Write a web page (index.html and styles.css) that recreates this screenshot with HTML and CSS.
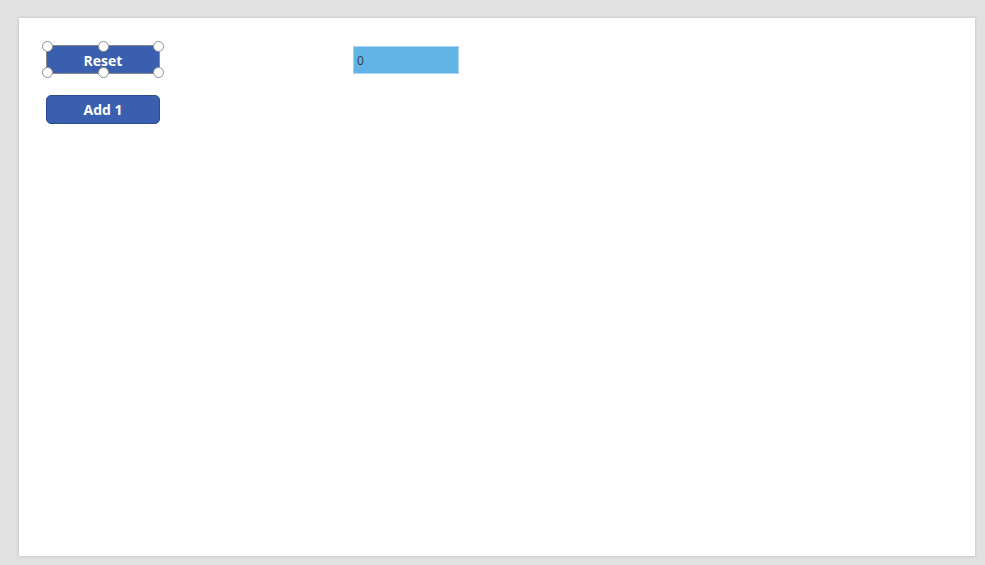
FILE: index.html
```html
<!DOCTYPE html>
<html lang="en">
<head>
<meta charset="utf-8">
<title>Canvas</title>
<link rel="stylesheet" href="styles.css">
</head>
<body>
<main class="canvas">
  <div class="controls">
    <div class="button-col">
      <div class="selected">
        <button class="btn btn-selected" type="button">Reset</button>
        <span class="handle h-tl"></span>
        <span class="handle h-tc"></span>
        <span class="handle h-tr"></span>
        <span class="handle h-bl"></span>
        <span class="handle h-bc"></span>
        <span class="handle h-br"></span>
      </div>
      <button class="btn" type="button">Add 1</button>
    </div>
    <div class="label">0</div>
  </div>
</main>
</body>
</html>
```
FILE: styles.css
```css
html, body {
  margin: 0;
  padding: 0;
}
body {
  background: #e1e1e1;
  width: 985px;
  height: 565px;
  box-sizing: border-box;
  padding: 18px 10px 9px 19px;
  font-family: "Open Sans", "Liberation Sans", sans-serif;
  overflow: hidden;
}
.canvas {
  width: 956px;
  height: 538px;
  background: #ffffff;
  box-shadow: 0 0 3px rgba(0, 0, 0, 0.18);
  box-sizing: border-box;
  padding: 27px 0 0 27px;
}
.controls {
  display: flex;
  align-items: flex-start;
}
.button-col {
  display: flex;
  flex-direction: column;
  gap: 21px;
  width: 114px;
}
.selected {
  position: relative;
  width: 114px;
  height: 29px;
}
.btn {
  display: block;
  width: 114px;
  height: 29px;
  margin: 0;
  padding: 0;
  background: #3a5fae;
  border: 1px solid #2b4a92;
  border-radius: 5px;
  color: #ffffff;
  font-family: "Open Sans", "Liberation Sans", sans-serif;
  font-weight: 700;
  font-size: 14px;
  line-height: 27px;
  text-align: center;
  box-sizing: border-box;
}
.btn-selected {
  border-radius: 0;
  border: 1px solid #8a8a8a;
  padding-top: 2px;
  line-height: 25px;
}
.handle {
  position: absolute;
  width: 11px;
  height: 11px;
  box-sizing: border-box;
  border: 1px solid #8f8f8f;
  border-radius: 50%;
  background: #ffffff;
}
.h-tl { left: -4px; top: -4px; }
.h-tc { left: 52px; top: -4px; }
.h-tr { left: 107px; top: -4px; }
.h-bl { left: -4px; top: 22px; }
.h-bc { left: 52px; top: 22px; }
.h-br { left: 107px; top: 22px; }
.label {
  margin-left: 193px;
  margin-top: 1px;
  width: 106px;
  height: 28px;
  box-sizing: border-box;
  background: #62b4e4;
  border: 1px solid #a9d3ee;
  color: #2e3a44;
  font-family: "Open Sans", "Liberation Sans", sans-serif;
  font-size: 12px;
  line-height: 27px;
  padding-left: 3px;
}
```
